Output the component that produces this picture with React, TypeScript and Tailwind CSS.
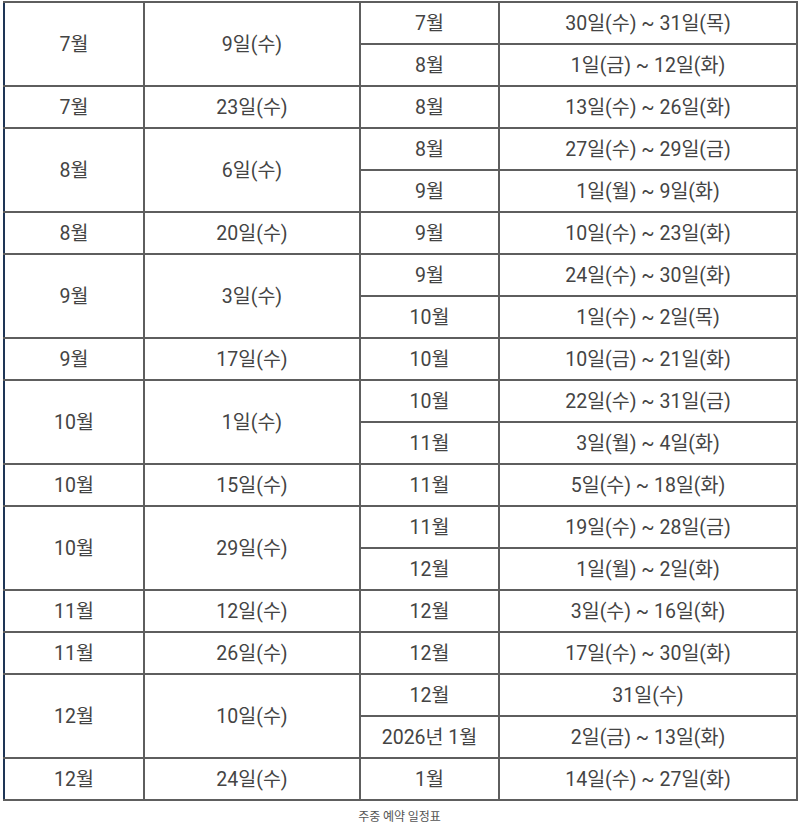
type Sub = { m: string; range: string };
type Group = { month: string; day: string; subs: Sub[] };

const groups: Group[] = [
  { month: "7월", day: "9일(수)", subs: [{ m: "7월", range: "30일(수) ~ 31일(목)" }, { m: "8월", range: "1일(금) ~ 12일(화)" }] },
  { month: "7월", day: "23일(수)", subs: [{ m: "8월", range: "13일(수) ~ 26일(화)" }] },
  { month: "8월", day: "6일(수)", subs: [{ m: "8월", range: "27일(수) ~ 29일(금)" }, { m: "9월", range: "1일(월) ~ 9일(화)" }] },
  { month: "8월", day: "20일(수)", subs: [{ m: "9월", range: "10일(수) ~ 23일(화)" }] },
  { month: "9월", day: "3일(수)", subs: [{ m: "9월", range: "24일(수) ~ 30일(화)" }, { m: "10월", range: "1일(수) ~ 2일(목)" }] },
  { month: "9월", day: "17일(수)", subs: [{ m: "10월", range: "10일(금) ~ 21일(화)" }] },
  { month: "10월", day: "1일(수)", subs: [{ m: "10월", range: "22일(수) ~ 31일(금)" }, { m: "11월", range: "3일(월) ~ 4일(화)" }] },
  { month: "10월", day: "15일(수)", subs: [{ m: "11월", range: "5일(수) ~ 18일(화)" }] },
  { month: "10월", day: "29일(수)", subs: [{ m: "11월", range: "19일(수) ~ 28일(금)" }, { m: "12월", range: "1일(월) ~ 2일(화)" }] },
  { month: "11월", day: "12일(수)", subs: [{ m: "12월", range: "3일(수) ~ 16일(화)" }] },
  { month: "11월", day: "26일(수)", subs: [{ m: "12월", range: "17일(수) ~ 30일(화)" }] },
  { month: "12월", day: "10일(수)", subs: [{ m: "12월", range: "31일(수)" }, { m: "2026년 1월", range: "2일(금) ~ 13일(화)" }] },
  { month: "12월", day: "24일(수)", subs: [{ m: "1월", range: "14일(수) ~ 27일(화)" }] },
];

const cell = "border-2 border-[#5e5e5e] text-center align-middle p-0 pt-[2px]";

export default function App() {
  return (
    <div
      className="min-h-[834px] w-[799px] bg-white pt-px text-[#444]"
      style={{ fontFamily: "Roboto, 'Noto Sans CJK KR', sans-serif" }}
    >
      <table className="ml-[3px] w-[795px] table-fixed border-collapse border-l-2 border-l-[#1e3556] text-[19.5px]">
        <colgroup>
          <col className="w-[140px]" />
          <col className="w-[216px]" />
          <col className="w-[139px]" />
          <col />
        </colgroup>
        <tbody>
          {groups.map((g, gi) =>
            g.subs.map((s, si) => (
              <tr key={`${gi}-${si}`} className="h-[42px]">
                {si === 0 ? (
                  <>
                    <td rowSpan={g.subs.length} className={`${cell} border-l-[#1e3556]`}>
                      {g.month}
                    </td>
                    <td rowSpan={g.subs.length} className={cell}>
                      {g.day}
                    </td>
                  </>
                ) : null}
                <td className={cell}>{s.m}</td>
                <td className={cell}>{s.range}</td>
              </tr>
            ))
          )}
        </tbody>
      </table>
      <p
        className="mt-[6px] text-center text-[12px] text-[#555]"
        style={{ fontFamily: "'Noto Sans CJK KR', sans-serif" }}
      >
        주중 예약 일정표
      </p>
    </div>
  );
}
